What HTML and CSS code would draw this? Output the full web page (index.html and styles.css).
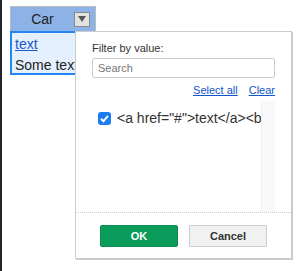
FILE: index.html
```html
<!DOCTYPE html>
<html lang="en">
<head>
    <meta charset="UTF-8">
    <meta name="viewport" content="width=device-width, initial-scale=1.0">
    <title>Filter</title>
    <link rel="stylesheet" href="styles.css">
</head>
<body>
    <div class="sheet">
        <div class="col-head">
            <span class="col-name">Car</span>
            <span class="drop-btn"><span class="tri"></span></span>
        </div>
        <div class="cell">
            <a href="#">text</a><br>Some text
        </div>

        <div class="filter-menu">
            <div class="filter-top">
                <div class="filter-label">Filter by value:</div>
                <input class="search" type="text" placeholder="Search">
                <div class="filter-links">
                    <a href="#">Select all</a>
                    <a href="#">Clear</a>
                </div>
            </div>
            <div class="values">
                <div class="value-list">
                    <div class="value-row">
                        <span class="check">
                            <svg width="13" height="13" viewBox="0 0 13 13"><path d="M3 6.8 L5.4 9.2 L10 3.8" fill="none" stroke="#fff" stroke-width="2"/></svg>
                        </span>
                        <span class="value-text">&lt;a href="#"&gt;text&lt;/a&gt;&lt;br&gt;Some text</span>
                    </div>
                </div>
                <div class="scroll-track"></div>
            </div>
            <div class="filter-foot">
                <button class="btn ok">OK</button>
                <button class="btn cancel">Cancel</button>
            </div>
        </div>
    </div>
</body>
</html>
```

FILE: styles.css
```css
html, body {
    height: 100%;
}
body {
    margin: 0;
    background: #fff;
    border-left: 2px solid #23262a;
    font-family: "Liberation Sans", Arial, sans-serif;
    color: #222;
}
.sheet {
    position: relative;
    padding: 6px 0 0 8px;
}
.col-head {
    width: 84px;
    height: 24px;
    border: 1px solid #bbb;
    border-bottom: none;
    background: #8db3e6;
    display: flex;
    align-items: center;
    font-size: 14px;
}
.col-name {
    flex: 1;
    text-align: center;
}
.drop-btn {
    width: 14px;
    height: 13px;
    margin-right: 5px;
    border: 1px solid #8a8a8a;
    background: #e2e2e2;
    display: flex;
    align-items: center;
    justify-content: center;
}
.tri {
    width: 0;
    height: 0;
    border-left: 4px solid transparent;
    border-right: 4px solid transparent;
    border-top: 6px solid #555;
}
.cell {
    box-sizing: border-box;
    width: 86px;
    height: 44px;
    border: 2px solid #2386f4;
    background: #e4f0fd;
    padding: 1px 3px 0;
    font-size: 14px;
    line-height: 21px;
    white-space: nowrap;
    overflow: hidden;
}
.cell a {
    color: #1a56cf;
}
.filter-menu {
    position: absolute;
    left: 73px;
    top: 31px;
    box-sizing: border-box;
    width: 217px;
    height: 228px;
    background: #fff;
    border: 1px solid #ccc;
    box-shadow: 1px 1px 0 #c8c8c8;
    display: flex;
    flex-direction: column;
    font-size: 11px;
}
.filter-top {
    padding: 10px 16px 0;
}
.filter-label {
    line-height: 13px;
    color: #333;
}
.search {
    display: block;
    box-sizing: border-box;
    width: 100%;
    height: 20px;
    margin-top: 3px;
    padding: 0 5px;
    border: 1px solid #ccc;
    border-radius: 2px;
    font-family: inherit;
    font-size: 11px;
    outline: none;
}
.search::placeholder {
    color: #777;
}
.filter-links {
    margin-top: 6px;
    line-height: 13px;
    display: flex;
    justify-content: flex-end;
    gap: 11px;
}
.filter-links a {
    color: #1155cc;
}
.values {
    flex: 1;
    margin: 4px 16px 0;
    display: flex;
    overflow: hidden;
}
.value-list {
    flex: 1;
    min-width: 0;
    padding: 9px 0 0 6px;
    overflow: hidden;
}
.value-row {
    display: flex;
    align-items: center;
    height: 16px;
    white-space: nowrap;
}
.check {
    flex: none;
    width: 13px;
    height: 13px;
    border-radius: 3px;
    background: #1b7cf4;
    margin-right: 6px;
}
.check svg {
    display: block;
}
.value-text {
    font-size: 14px;
    color: #333;
}
.scroll-track {
    width: 13px;
    background: #f8f8f8;
    border-left: 1px solid #efefef;
}
.filter-foot {
    border-top: 1px dotted #ccc;
    padding: 12px 0 11px;
    display: flex;
    justify-content: center;
    gap: 11px;
}
.btn {
    box-sizing: border-box;
    width: 78px;
    height: 22px;
    border-radius: 2px;
    font-family: inherit;
    font-size: 11px;
    font-weight: bold;
}
.ok {
    background: #0b9c5b;
    border: 1px solid #0a8a50;
    color: #fff;
}
.cancel {
    background: #f1f1f1;
    border: 1px solid #ccc;
    color: #333;
}
```
